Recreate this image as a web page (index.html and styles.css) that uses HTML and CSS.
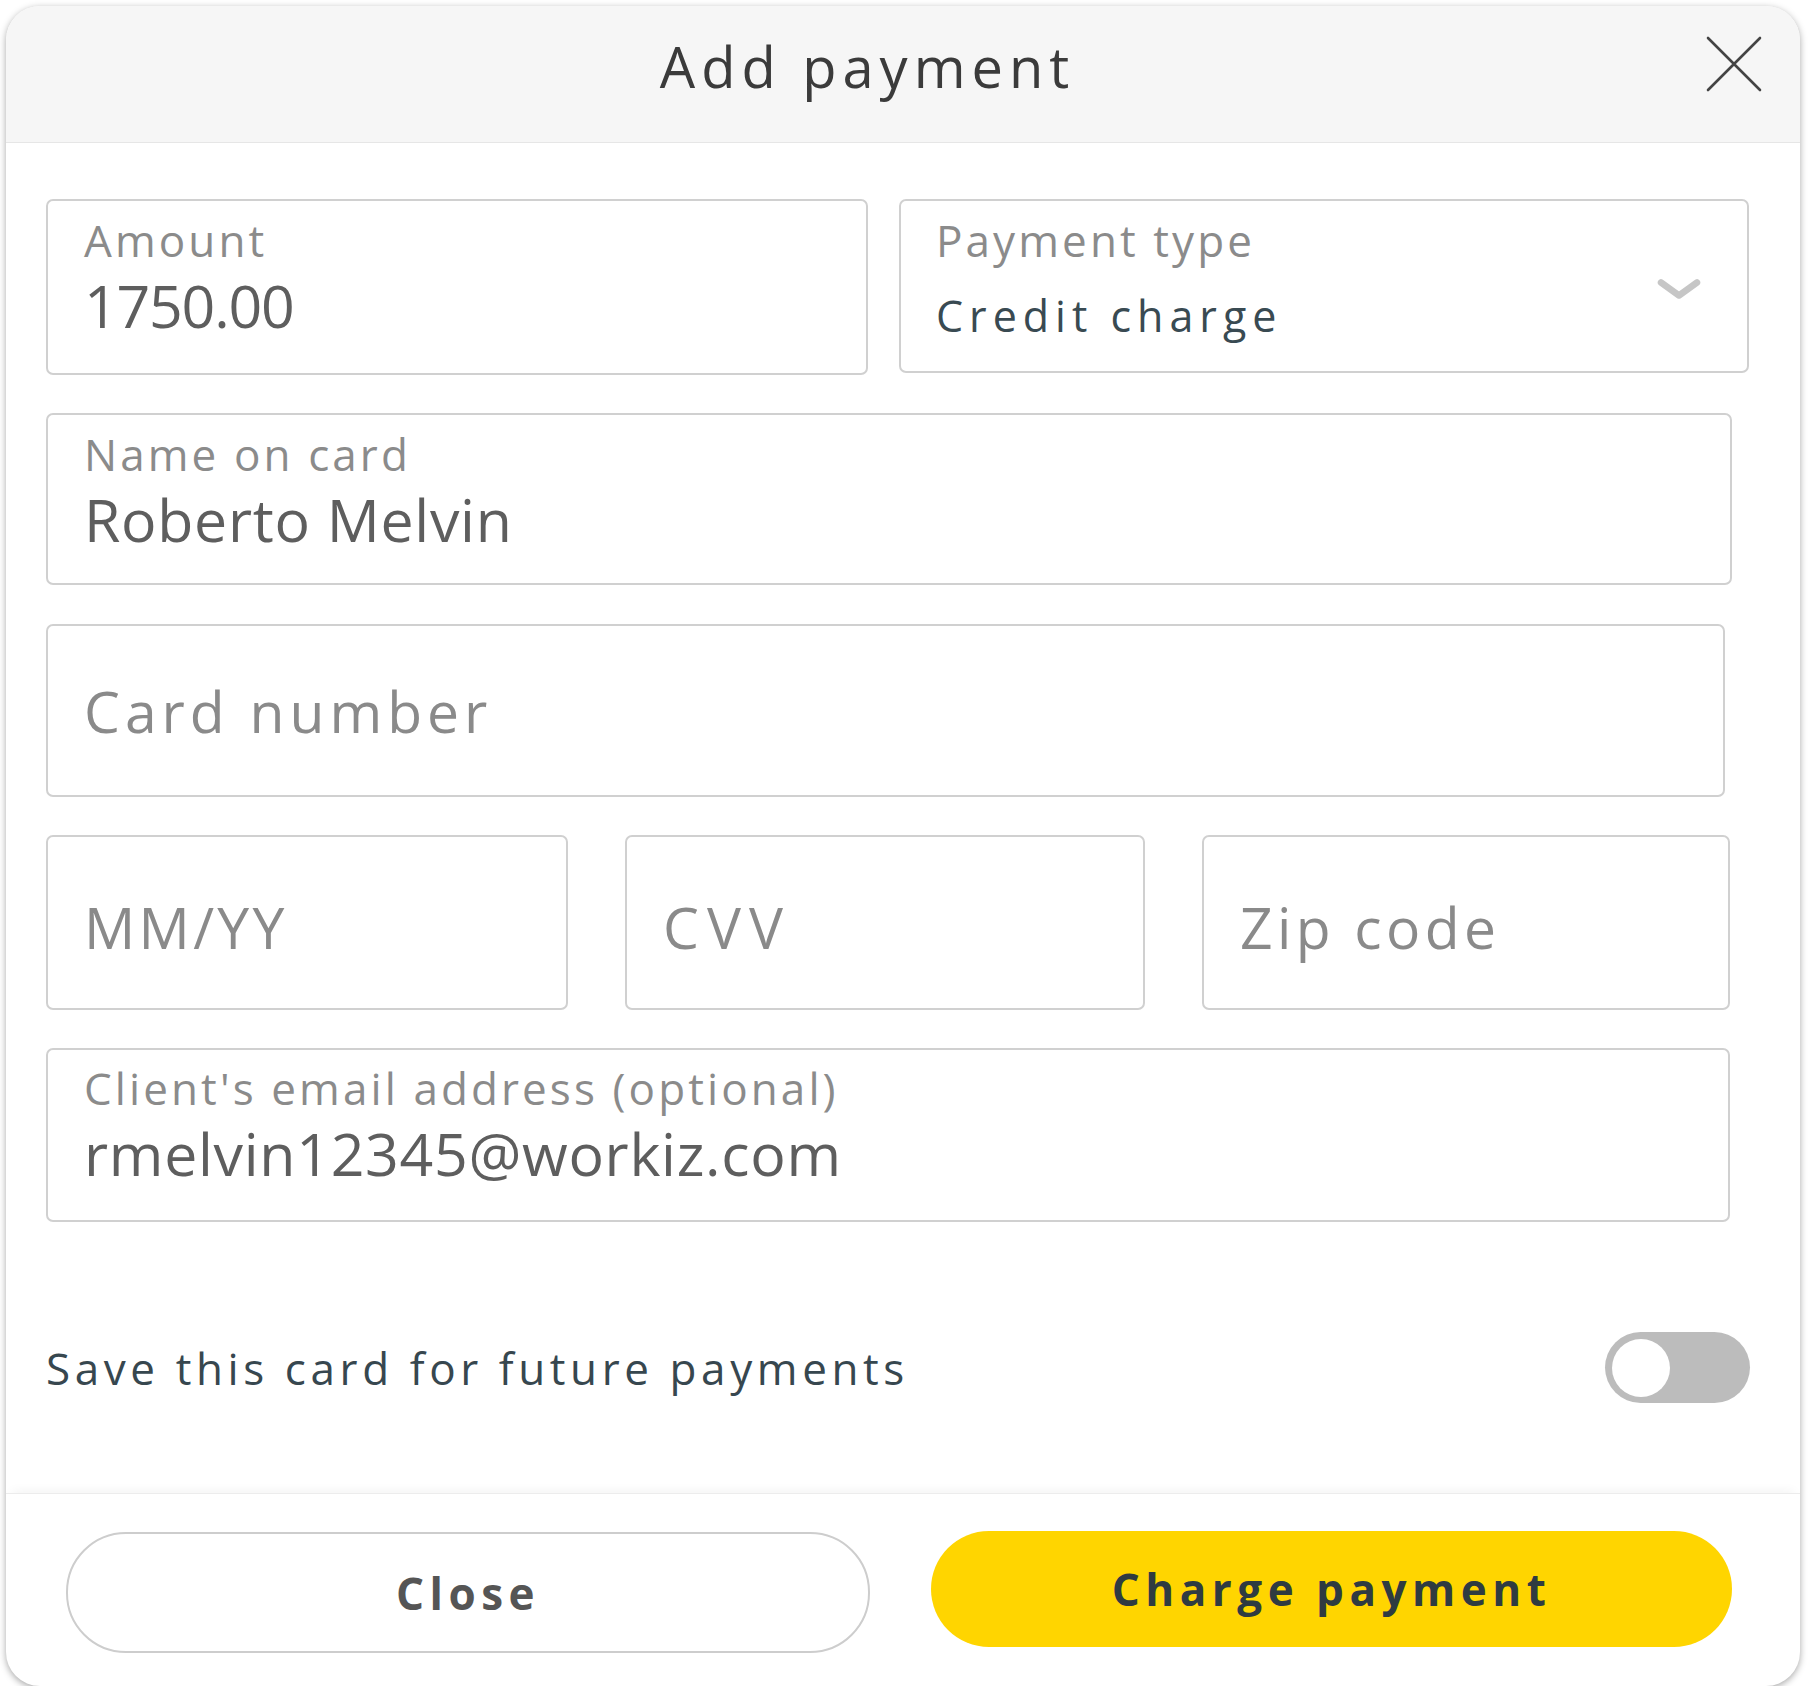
FILE: index.html
```html
<!DOCTYPE html>
<html lang="en">
<head>
<meta charset="utf-8">
<title>Add payment</title>
<link rel="stylesheet" href="styles.css">
</head>
<body>
<div class="modal">
  <header class="modal-header">
    <h1 class="modal-title">Add payment</h1>
    <button class="close-btn" aria-label="Close">
      <svg width="56" height="56" viewBox="0 0 56 56"><path d="M2 2 L54 54 M54 2 L2 54" stroke="#444" stroke-width="2.6" fill="none" stroke-linecap="round"/></svg>
    </button>
  </header>
  <div class="modal-body">
    <div class="row-top">
      <div class="field field-amount">
        <div class="field-label">Amount</div>
        <div class="field-value field-value-num">1750.00</div>
      </div>
      <div class="field field-select">
        <div class="select-content">
          <div class="field-label">Payment type</div>
          <div class="select-value">Credit charge</div>
        </div>
        <svg class="chevron" width="44" height="22" viewBox="0 0 44 22"><path d="M4 4.5 L22 17.5 L40 4.5" stroke="#c6c6c6" stroke-width="6.5" fill="none" stroke-linecap="round" stroke-linejoin="round"/></svg>
      </div>
    </div>
    <div class="field field-name">
      <div class="field-label">Name on card</div>
      <div class="field-value">Roberto Melvin</div>
    </div>
    <div class="field field-card field-placeholder">Card number</div>
    <div class="row-three">
      <div class="field field-exp field-placeholder">MM/YY</div>
      <div class="field field-cvv field-placeholder">CVV</div>
      <div class="field field-zip field-placeholder">Zip code</div>
    </div>
    <div class="field field-email">
      <div class="field-label">Client's email address (optional)</div>
      <div class="field-value">rmelvin12345@workiz.com</div>
    </div>
    <div class="save-row">
      <span class="save-text">Save this card for future payments</span>
      <span class="toggle"><span class="knob"></span></span>
    </div>
  </div>
  <footer class="modal-footer">
    <button class="btn btn-close">Close</button>
    <button class="btn btn-charge">Charge payment</button>
  </footer>
</div>
</body>
</html>
```

FILE: styles.css
```css
* { box-sizing: border-box; }

html, body {
  margin: 0;
  padding: 0;
  background: #ffffff;
}

body {
  font-family: "Open Sans", "Noto Sans", sans-serif;
  padding: 6px 0 0 6px;
}

.modal {
  width: 1794px;
  height: 1680px;
  background: #ffffff;
  border-radius: 34px;
  box-shadow: 0 2px 7px rgba(0, 0, 0, 0.35);
  overflow: hidden;
  display: flex;
  flex-direction: column;
}

.modal-header {
  height: 137px;
  flex: none;
  background: #f6f6f6;
  border-bottom: 1px solid #e6e6e6;
  display: flex;
  align-items: flex-start;
  padding: 25px 38px 0 23px;
}

.modal-title {
  flex: 1;
  margin: 0;
  text-align: center;
  font-size: 56px;
  line-height: 70px;
  font-weight: 400;
  color: #3b3b3b;
  letter-spacing: 6px;
}

.close-btn {
  margin-top: 5px;
  width: 56px;
  height: 56px;
  padding: 0;
  border: 0;
  background: transparent;
  display: flex;
}

.modal-body {
  flex: 1;
  padding: 56px 50px 0 40px;
  display: flex;
  flex-direction: column;
}

.field {
  border: 2px solid #d0d0d0;
  border-radius: 7px;
  background: #fff;
  padding: 13px 0 0 36px;
}

.field-label {
  font-size: 44px;
  line-height: 52px;
  color: #8b8b8b;
  letter-spacing: 3.1px;
  white-space: nowrap;
}

.field-value {
  margin-top: 4px;
  font-size: 59px;
  line-height: 70px;
  color: #5e5e5e;
  letter-spacing: 0.7px;
  white-space: nowrap;
}

.field-value-num {
  letter-spacing: -1.2px;
}

.row-top {
  display: flex;
  gap: 31px;
  align-items: flex-start;
}

.field-amount {
  width: 822px;
  height: 176px;
}

.field-select {
  width: 850px;
  height: 174px;
  display: flex;
  align-items: center;
  padding: 0 46px 0 35px;
}

.select-content {
  flex: 1;
  align-self: flex-start;
  padding-top: 13px;
}

.select-value {
  margin-top: 20px;
  font-size: 43px;
  line-height: 60px;
  color: #394a52;
  letter-spacing: 6px;
  white-space: nowrap;
}

.chevron {
  flex: none;
  margin-top: 6px;
}

.field-name {
  margin-top: 38px;
  width: 1686px;
  height: 172px;
}

.field-placeholder {
  display: flex;
  align-items: center;
  padding: 0 0 0 36px;
  font-size: 57px;
  color: #8a8a8a;
  letter-spacing: 4px;
  white-space: nowrap;
}

.field-card {
  margin-top: 39px;
  width: 1679px;
  height: 173px;
  letter-spacing: 5px;
}

.row-three {
  margin-top: 38px;
  display: flex;
  gap: 57px;
}

.row-three .field {
  height: 175px;
  padding-top: 8px;
}

.field-exp { width: 522px; letter-spacing: 3.3px; }
.field-cvv { width: 520px; letter-spacing: 8px; }
.field-zip { width: 528px; letter-spacing: 4.4px; }

.field-email {
  margin-top: 38px;
  width: 1684px;
  height: 174px;
  padding-top: 12px;
}

.save-row {
  margin-top: 110px;
  height: 71px;
  display: flex;
  align-items: center;
  justify-content: space-between;
}

.save-text {
  font-size: 44px;
  color: #37474f;
  letter-spacing: 4.6px;
}

.toggle {
  width: 145px;
  height: 71px;
  border-radius: 36px;
  background: #bcbcbc;
  display: flex;
  align-items: center;
  padding: 0 7px;
}

.knob {
  width: 58px;
  height: 58px;
  border-radius: 50%;
  background: #ffffff;
}

.modal-footer {
  flex: none;
  height: 193px;
  border-top: 1px solid #ececec;
  box-shadow: 0 -8px 10px -6px rgba(0, 0, 0, 0.05);
  display: flex;
  align-items: flex-start;
  gap: 61px;
  padding: 38px 0 0 60px;
}

.btn {
  font-family: "Open Sans", "Noto Sans", sans-serif;
  font-size: 44px;
  font-weight: 700;
  letter-spacing: 5.5px;
  border-radius: 60px;
  cursor: pointer;
}

.btn-close {
  width: 804px;
  height: 121px;
  background: #ffffff;
  border: 2px solid #cdcdcd;
  color: #555555;
}

.btn-charge {
  width: 801px;
  height: 116px;
  background: #ffd500;
  border: 0;
  color: #2f3b41;
  margin-top: -1px;
}
```
